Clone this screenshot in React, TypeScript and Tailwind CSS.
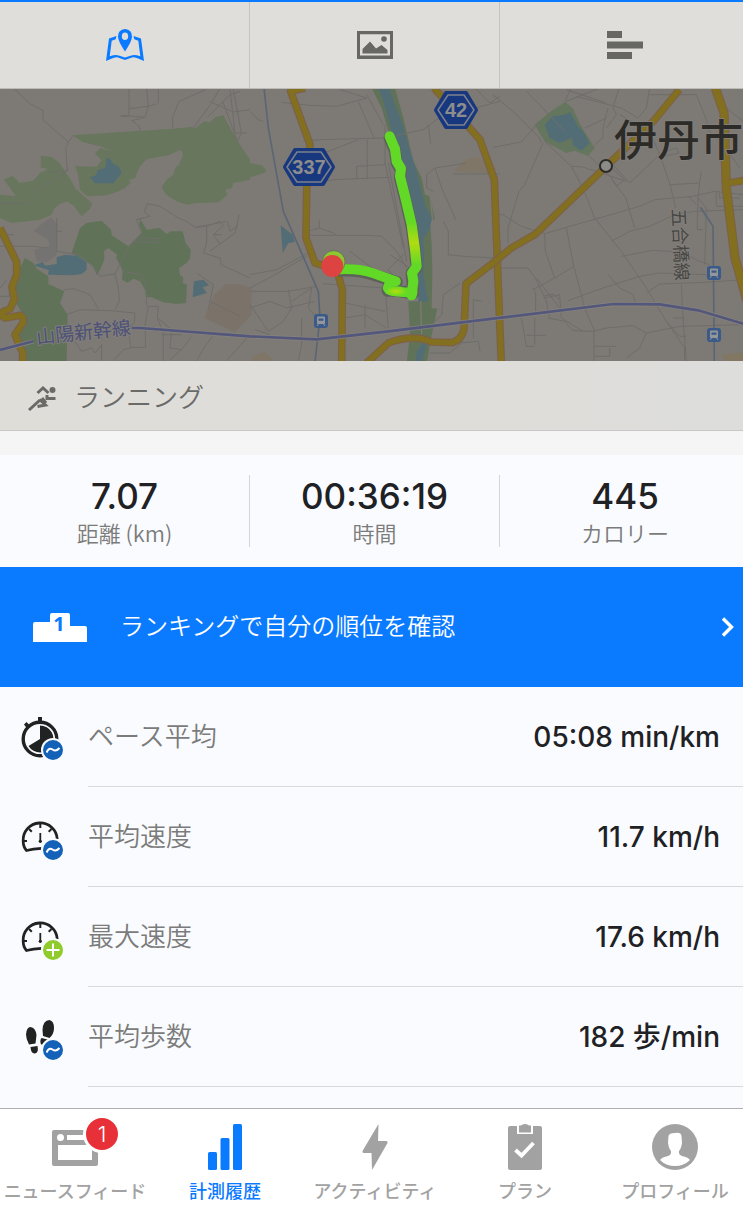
import type { ReactNode } from 'react';
import clsx from 'clsx';

type Badge = 'average' | 'max';

interface Metric {
  label: string;
  value: string;
  icon: ReactNode;
  badge: Badge;
}

// Geometry of the map is kept at 3 units per pixel, in three side by side tiles
const WEST_STREETS = [
  'M45 5L90 47 130 68 128 95 205 162 218 145',
  'M205 162L197 180 202 248 145 253',
  'M387 0V85L360 85M387 62L445 55 470 48M440 0L445 55 435 88 365 82M475 0V45M435 88L395 98 418 115 420 130',
  'M617 5L537 40 518 88V120',
  'M580 120L635 45 660 0M622 88L690 20 720 10M628 40L700 72 750 65M668 40L712 160M700 5L725 140M690 5L705 135H740M712 160L722 140',
  'M0 345H80L120 300 185 262 205 245',
  'M0 475H100L140 480M170 430H185M170 390V490L235 500 275 530 300 565 345 558 355 600 358 640 345 665',
  'M345 558L385 480 425 435M400 460L475 465 478 452 410 450M425 435L410 395 430 390',
  'M410 395L450 385 433 372 443 347 480 355 535 390 560 400 585 418 640 408 680 400',
  'M620 415V465L610 495 660 510 663 530 750 570M585 418L620 415 660 400 670 412 640 440 660 468M683 400L690 430 715 412M718 380L705 435 630 490M640 440H665',
  'M193 605L220 602 270 620 295 662M200 680L240 665 330 668 405 675 403 705 385 720 392 780 370 785 340 818',
  'M368 550L420 560 438 590 440 650 445 655H475L472 690 485 700 515 725 510 780 545 785M445 655L435 710 437 778H392M485 740H545M490 740V818M472 690L492 740',
  'M575 745L545 785 510 815M645 735L615 775 590 818M750 740L680 818M630 640L720 685M590 555L640 590 625 665',
  'M225 760L245 790 275 780 285 795 305 770M305 770V818M0 600L20 575M0 625H28V590M0 440H40',
];

const CENTRE_STREETS = [
  'M95 43L180 52 260 55 350 30M325 40L372 150M350 20L400 110M270 5L350 30',
  'M160 157L280 153 405 150M160 205L235 190 325 155M352 155V272M195 285L250 275 420 268M320 272V235L405 230',
  'M405 110V225L460 480M415 225L470 520M440 142L520 125 560 95 640 70 750 40M535 110L542 170',
  'M180 442H350L395 445 440 490 470 540M208 395V420L180 428M208 420L250 435 260 442',
  'M0 560L80 545 175 495M0 600L75 560 170 505M0 610H115L200 595M218 587L400 600 500 590M285 645L405 670M285 690L345 680 410 720M345 650V720M405 595L415 720',
  'M115 605L125 660 100 700 55 730 0 650M125 640L185 600 175 660 200 690M0 660L60 640 110 660 195 640M15 725L60 740',
  'M530 260L555 240 620 230 650 225M555 240L575 300 617 395M530 260V300L550 310M580 400L595 430V500L640 505 735 510M610 258H750',
  'M630 585L580 620 575 680 550 705M670 635L695 640M670 635V750M630 765L685 760 690 790M540 795H600L640 760',
  'M410 550L460 500M415 545L440 575M420 500L480 540M155 770L145 818M155 690L155 770',
  'M675 0L720 45 750 25M0 70L25 95 40 100M300 490L420 580',
];

const EAST_STREETS = [
  'M0 20L60 70 140 150 145 165M100 10L140 50 215 130M220 40L320 0M220 5L340 45M215 40L235 0M250 25L385 60 435 90 460 60',
  'M0 178L85 162 140 100M150 165L95 290 78 310 45 420V465M155 160L235 235 270 300 305 390 385 490 460 600 520 700 575 780V818',
  'M275 120L340 90M285 200L355 270 398 330 425 420M235 235L270 237 400 280M355 270L370 295 395 275 340 225M410 285L505 195 550 180 558 195 510 205 M410 285L350 220',
  'M345 60L330 120V150L305 170M340 120L370 80 360 60 378 0M380 80L470 130 500 200 530 285 548 360M470 0L460 60M470 20H610L640 95 650 130 690 170 740 240',
  'M0 375L30 380 85 415 155 437 220 418 360 378 440 355 485 335 600 325 665 310 750 320',
  'M155 437L157 490 185 570M220 418L240 525 275 660 303 725V818M120 605L185 570 243 535M118 600L128 615V680',
  'M355 460L410 430 470 415 545 380 605 370 750 365M385 505L480 487 565 492 620 520 650 530M225 638L330 600 440 565 500 555 640 560 670 575',
  'M625 250L620 285 530 290M620 285L615 330 640 360 635 530M615 330L613 390V425H630M670 310V355H750M680 310V330H740M585 325L610 350',
  'M565 590L570 690 580 818M460 615L500 588 640 583 750 575M345 560L380 600 420 620 428 645M700 60L750 100',
  'M20 540H105L130 575 160 640 170 690M155 630L200 620 205 690 270 730M130 570L200 660M150 625L180 618 200 635',
  'M85 690L100 775H125M100 742H160M125 690V770M165 690L215 700 240 728 300 730 340 720 420 713 460 735 560 715 750 710M460 735L440 780 400 810M540 690H575M305 775H370M305 805H350V780M520 700L560 745H580',
];

function Streets({ paths, x }: { paths: string[]; x: number }) {
  return (
    <g transform={`translate(${x} 0)`} fill="none" stroke="#6e6d6a" strokeWidth="3">
      {paths.map((d) => (
        <path key={d} d={d} />
      ))}
    </g>
  );
}

function Road({ d, width = 18 }: { d: string; width?: number }) {
  return (
    <g fill="none" strokeLinejoin="round">
      <path d={d} stroke="#7e6147" strokeWidth={width + 5} />
      <path d={d} stroke="#83701f" strokeWidth={width - 2} />
    </g>
  );
}

function RouteShield({ x, y, half, label }: { x: number; y: number; half: number; label: string }) {
  const hexagon = (w: number, h: number) =>
    `M${-w} 0L${-w + 10} ${-h}H${w - 10}L${w} 0L${w - 10} ${h}H${-w + 10}Z`;
  return (
    <g transform={`translate(${x} ${y})`} strokeLinejoin="round">
      <path d={hexagon(half, 17)} fill="#17377f" stroke="#17377f" strokeWidth="4" />
      <path d={hexagon(half - 2, 15)} fill="#17377f" stroke="#7d818c" strokeWidth="1.500" />
      <text
        y="7"
        textAnchor="middle"
        fill="#8d8d8d"
        className="font-['Liberation_Sans',sans-serif] text-[20px] font-bold"
      >
        {label}
      </text>
    </g>
  );
}

function Station({ x, y }: { x: number; y: number }) {
  return (
    <g transform={`translate(${x - 7} ${y - 7})`}>
      <rect width="14" height="14" rx="3" fill="#3b5a89" />
      <path
        d="M4 2.5h6q1 0 1 1V9q0 1-1 1H4Q3 10 3 9V3.500q0-1 1-1zM4.500 4.500v2.300h5V4.500z"
        fill="#939799"
        fillRule="evenodd"
      />
      <path d="M4.500 10L3 12M9.500 10l1.500 2" stroke="#939799" />
    </g>
  );
}

function RouteMap() {
  return (
    <svg
      viewBox="0 0 750 272"
      preserveAspectRatio="xMinYMid slice"
      className="block h-[272px] w-full bg-[#7d7974]"
      role="img"
      aria-label="伊丹市"
    >
      <defs>
        <radialGradient id="slow">
          <stop offset="0" stopColor="#b5dc0c" />
          <stop offset="1" stopColor="#62d926" />
        </radialGradient>
        <linearGradient id="track" gradientUnits="userSpaceOnUse" x1="0" y1="400" x2="0" y2="530">
          <stop offset="0" stopColor="#62d926" />
          <stop offset="0.5" stopColor="#b0dc10" />
          <stop offset="1" stopColor="#62d926" />
        </linearGradient>
      </defs>
      <g transform="translate(0 -1) scale(0.333333)">
        {/* parks */}
        <g fill="#67765d">
          <path d="M217 142L520 122 575 117 585 122 612 100 630 103 645 88 670 82 685 110 720 170 750 215V275L700 285 695 300 675 305 683 320 655 343 590 345 560 350 530 340 505 325 495 315 485 297 500 275 520 260 525 240 537 230 543 215 550 200 543 185 505 202 470 208 440 214 420 235 410 255 408 268 385 278 393 283 375 300 355 310 320 322 262 325 240 305 235 262 226 235 290 236 305 216 285 198 300 180 343 192 300 175 250 163Z" />
          <path d="M123 203L155 207 178 225 215 280 225 300 277 347 270 362 245 385 220 352 200 340 180 348 162 362 155 380 120 395 35 405 0 390V320L48 325 12 275 38 263 58 285 100 278 120 255 145 243 122 238Z" />
          <path d="M750 226L785 232 800 248 792 255 775 260 750 268Z" />
        </g>
        <g fill="#607359">
          <path d="M240 420L260 405 305 398 333 425 335 442 385 475 415 445 427 433 418 410 420 393 440 425 478 420 500 438 512 430H548L557 465 572 485 570 510 560 525 537 540 540 560 550 570 548 585 561 590 558 645 530 648 490 643 455 628 438 627 435 605 420 580 400 572 383 584 366 575 368 550 360 530 348 510 352 500 325 480 312 490 313 515 300 545 290 562 280 535 250 515 215 495Z" />
          <path d="M75 510L100 525 110 542 145 565V588L193 610 180 645 203 680 200 825H75L50 742 75 690 45 640 40 590 55 550Z" />
        </g>
        <g transform="translate(750 0)">
          <path
            d="M365 0H435L460 90 490 220 515 270 525 320 540 325 555 395H540L545 470 547 550 545 660 562 662 545 740 530 825H470L480 740 475 640H515L500 500 470 330 430 180 395 60Z"
            fill="#607359"
          />
          <path
            d="M385 0H418L435 50 455 100 475 170 500 250 512 300 528 360 540 378 545 395 538 425 520 450 522 500 520 560 535 640 505 642 500 520 480 350 450 220 425 130 400 40Z"
            fill="#536d77"
          />
          <path d="M515 735L532 760 515 825H495L500 790 515 770Z" fill="#536d77" />
          <path d="M512 640L515 740M540 320L548 395" stroke="#7d7974" strokeWidth="4" />
          <path d="M92 412L128 440 135 462 115 465 98 495Z" fill="#536d77" />
          <path d="M610 250L650 212 685 208 735 235 738 258 640 252Z" fill="#7f7668" />
          <path d="M5 805L45 792 70 818H5Z" fill="#7f7668" />
        </g>
        <path
          d="M1696 42L1719 62 1741 110 1784 180 1764 203 1724 188 1699 195 1634 160 1604 110 1659 65Z"
          fill="#64765d"
        />
        <g fill="#536d77">
          <path d="M270 267L288 262 293 247 315 240 320 212 328 210 340 228 355 235 365 255 340 286H285Z" />
          <path d="M102 532L128 522 135 533 170 528V508L195 500 230 503 260 523V545L245 558 215 562 143 560 147 547Z" />
          <path d="M582 580L610 575 628 592 608 598 620 615 578 628Z" />
          <path d="M1634 110L1659 85 1694 80 1711 72 1734 115 1749 130 1769 165 1744 188 1719 172 1716 150 1679 165 1649 150Z" />
        </g>
        <path d="M100 428L152 388 172 408 168 470 170 500 140 522 110 520 103 485 148 474 145 455Z" fill="#757371" />
        <path d="M613 690L642 620 678 588H715L755 600V680L705 733Z" fill="#7b736a" />
        <path d="M2165 800L2250 792V820H2175Z" fill="#817762" />

        <Streets paths={WEST_STREETS} x={0} />
        <Streets paths={CENTRE_STREETS} x={750} />
        <Streets paths={EAST_STREETS} x={1479} />

        {/* local railways */}
        <g fill="none" stroke="#5b6675" strokeWidth="5">
          <path d="M792 0L805 120 850 370 955 610 960 690 945 820" />
          <path d="M2101 358L2139 415 2143 820" />
        </g>

        {/* main roads */}
        <Road d="M0 420L50 522V560L36 595 43 635 30 663 10 670Q2 685 15 690L60 682Q75 688 68 705L45 740 68 795V825" />
        <Road d="M915 0L872 10 930 170Q925 260 920 300L918 450 945 525 1010 545 1027 605 1025 825" />
        <Road d="M1302 0L1440 155 1483 275 1495 600 1504 825" />
        <Road d="M1100 825L1165 765Q1215 745 1265 752L1295 762 1357 764Q1385 755 1392 725L1398 587 1479 525 1534 480 1604 440 1819 235 1960 100 2038 5" />
        <Road d="M2146 0L2172 75 2179 300 2205 510 2250 670" width={23} />
        <Road d="M2185 285L2250 275" />

        {/* shinkansen */}
        <path
          d="M0 786L100 760M395 720H420L750 745 950 754 1165 730 1479 692 1840 648 1979 649 2094 667 2250 713"
          fill="none"
          stroke="#85817e"
          strokeWidth="13"
        />
        <path
          d="M0 786L100 760M395 720H420L750 745 950 754 1165 730 1479 692 1840 648 1979 649 2094 667 2250 713"
          fill="none"
          stroke="#53577b"
          strokeWidth="8"
        />

        {/* recorded track */}
        <g fill="none" strokeLinecap="round" strokeLinejoin="round">
          <path
            d="M1020 548Q1080 545 1120 560L1190 582M1170 582L1163 608H1190L1238 617M1169 150L1185 188 1190 225 1203 247 1200 270 1215 330 1235 415 1245 490 1250 540 1235 555 1240 615"
            stroke="#5d6259"
            strokeWidth="36"
          />
          <path d="M1020 544Q1080 541 1120 556L1188 580M1170 582L1163 600Q1175 615 1238 613" stroke="#62d926" strokeWidth="29" />
          <path
            d="M1169 145L1185 183 1190 220 1203 242 1200 265 1215 325 1235 410 1245 485 1250 535 1236 555 1240 580 1235 622"
            stroke="url(#track)"
            strokeWidth="30"
          />
        </g>
        <ellipse cx="1188" cy="610" rx="34" ry="15" fill="url(#slow)" />
        <circle cx="1001" cy="522" r="34" fill="#8cc832" stroke="#5f634f" strokeWidth="2" />
        <circle cx="997" cy="534" r="33" fill="#dd4441" />
      </g>

      <RouteShield x={309} y={78} half={24} label="337" />
      <RouteShield x={456} y={21} half={20} label="42" />
      <Station x={321} y={232} />
      <Station x={714} y={184} />
      <Station x={714} y={246} />
      <circle cx="606" cy="77" r="6" fill="#8d8b87" stroke="#2c2b29" strokeWidth="2" />
      <g className="font-['Noto_Sans_CJK_JP',sans-serif]" strokeLinejoin="round" paintOrder="stroke" stroke="#827e7a">
        <text x="614" y="67" fill="#2c2b28" strokeWidth="2" className="text-[43px] font-medium">
          伊丹市
        </text>
        <text x="37" y="255" transform="rotate(-6 37 255)" fill="#4c5178" strokeWidth="2" className="text-[19px]">
          山陽新幹線
        </text>
        <text
          x="672"
          y="120"
          transform="rotate(87 672 120)"
          fill="#464644"
          strokeWidth="2"
          className="text-[18px]"
        >
          五合橋線
        </text>
      </g>
    </svg>
  );
}

function MapIcon() {
  return (
    <svg viewBox="0 0 38 32" className="h-8 w-[38px]" fill="currentColor">
      <path
        d="M10.500 7L3 9.500 0 32q10-5 12-3.500l7 2.500 7-2.500q2-1.500 12 3.500L35 9.500 27.500 7l.8 3.200 4 1.500 2 15.500q-6-2-9-.8L19 28.500l-6.300-2.100q-3-1.200-9 .8l2-15.500 4-1.500z"
        fillRule="evenodd"
      />
      <path
        d="M19 0q7 .5 7 7.500 0 4.500-7 15-7-10.500-7-15Q12 .5 19 0zm0 3.500q-3.200 0-3.200 3.800t3.200 3.800 3.200-3.800-3.200-3.800z"
        fillRule="evenodd"
      />
    </svg>
  );
}

function PhotoIcon() {
  return (
    <svg viewBox="0 0 36 28" className="h-7 w-9" fill="currentColor">
      <path d="M0 0h36v28H0zM3 3.200v21.300h30V3.200z" fillRule="evenodd" />
      <path d="M5.500 22.500v-4.500L13 10.500l6 7 5.500-3.500 6 5v3.500z" />
      <circle cx="27" cy="8" r="2.800" />
    </svg>
  );
}

function SplitsIcon() {
  return (
    <svg viewBox="0 0 36 28" className="h-7 w-9" fill="currentColor">
      <path d="M0 0h15v7H0zM0 10.500h36v7H0zM0 21h25v7H0z" />
    </svg>
  );
}

function RunnerIcon() {
  return (
    <svg viewBox="0 0 28 26" className="h-[26px] w-7" fill="none" stroke="currentColor" strokeWidth="3">
      <path d="M9.500 8L15 3l5.500 5" />
      <path d="M1 25L12 15" />
      <path d="M11.500 14.500l6 5.500-8 1.500M14 13l4 5" />
      <path d="M19 10v3.500h8.500" />
      <circle cx="24.500" cy="5" r="3" fill="currentColor" stroke="none" />
    </svg>
  );
}

function StopwatchIcon() {
  return (
    <svg viewBox="0 0 44 46" className="h-[46px] w-11">
      <circle cx="19" cy="23" r="16.800" fill="none" stroke="#202322" strokeWidth="3.400" />
      <path d="M17 1h4v5h-4zM3 8.500L5.500 6l3.500 3.500-3 3z" fill="#202322" />
      <path d="M19 23V9.500a13.500 13.500 0 1 1-11.500 20.500z" fill="#202322" />
    </svg>
  );
}

function GaugeIcon() {
  return (
    <svg viewBox="0 0 44 46" className="h-[46px] w-11" fill="none" stroke="#202322">
      <path d="M20.500 32.300Q12 32.500 5.500 34.500 2.200 31 2.200 25a17 17 0 0 1 34-2" strokeWidth="2.800" />
      <path d="M19.300 8v4M8 13l2.800 2.800M30.500 13l-2.800 2.800M3 25h3M35 25h-3" strokeWidth="2" />
      <path d="M19.300 17v9" strokeWidth="1.800" />
      <circle cx="19.300" cy="25.300" r="1.600" fill="#202322" stroke="none" />
    </svg>
  );
}

function FootstepsIcon() {
  return (
    <svg viewBox="0 0 44 46" className="h-[46px] w-11" fill="#202322">
      <path d="M9.500 11q5 .5 6 8l-1 8.500-6.500 1Q5 23 5 18.500 5.500 11 9.500 11zM9.500 31l7-1q1.500 7-2.500 7.500T9.500 31z" />
      <path d="M28.500 4q4.500 1 4.500 8 0 6-4.500 10l-6.500-2-.5-6Q22 4 28.500 4zM20.500 22l6 1.500-3 5h-3.500q-1.500-4 .5-6.500z" />
    </svg>
  );
}

function MetricBadge({ kind }: { kind: Badge }) {
  return (
    <span
      className={clsx(
        'absolute top-[22px] left-5 flex size-6 items-center justify-center rounded-full border-2 border-[#fafbfe]',
        kind === 'average' ? 'bg-[#1462b8]' : 'bg-[#8fcb2b]'
      )}
    >
      <svg viewBox="0 0 14 14" className="size-3.5" fill="none" stroke="#fff" strokeWidth="2">
        {kind === 'average' ? <path d="M.5 9.500Q3 4 6.500 6.500T13.500 5" /> : <path d="M7 .5v13M.5 7h13" />}
      </svg>
    </span>
  );
}

function NewsIcon() {
  return (
    <svg viewBox="0 0 46 46" className="size-[46px]">
      <path
        d="M2 6h42q2 0 2 2v32q0 2-2 2H2q-2 0-2-2V8q0-2 2-2zm4 15v15h34V21zm9-10v5h26v-5zM8.500 10a3.200 3.200 0 1 0 0 7 3.200 3.200 0 0 0 0-7z"
        fill="currentColor"
        fillRule="evenodd"
      />
    </svg>
  );
}

function BarsIcon() {
  return (
    <svg viewBox="0 0 46 46" className="size-[46px]" fill="currentColor">
      <rect x="6" y="28" width="9" height="18" rx="1.500" />
      <rect x="18.500" y="14" width="9" height="32" rx="1.500" />
      <rect x="31" width="9" height="46" rx="1.500" />
    </svg>
  );
}

function BoltIcon() {
  return (
    <svg viewBox="0 0 46 46" className="size-[46px]" fill="currentColor">
      <path d="M26.500 0L10.500 27q-.5 1.500 1 2h8L20 46l15.500-27q.5-1.500-1-2H26z" />
    </svg>
  );
}

function ClipboardIcon() {
  return (
    <svg viewBox="0 0 46 46" className="size-[46px]" fill="currentColor">
      <path d="M8 2h7v8h16V2h7q2 0 2 2v40q0 2-2 2H8q-2 0-2-2V4q0-2 2-2z" />
      <path d="M17 1.500h2q1-1.500 4-1.500t4 1.500h2v7H17z" />
      <path d="M13.500 26l6 5.500L31.500 19" fill="none" stroke="#fff" strokeWidth="3.800" />
    </svg>
  );
}

function ProfileIcon() {
  return (
    <svg viewBox="0 0 46 46" className="size-[46px]">
      <circle cx="23" cy="23" r="23" fill="currentColor" />
      <path
        d="M23 9q6-1 6.500 3l.5 7q-1 6-3 8v2q0 2 3 3 6 1 8 4-6 6-15 6T8 36q2-3 8-4 3-1 3-3v-2q-2-2-3-8l.5-7Q17 9 23 9z"
        fill="#fff"
      />
    </svg>
  );
}

const VIEWS = [
  { name: '地図', icon: <MapIcon />, active: true },
  { name: '写真', icon: <PhotoIcon />, active: false },
  { name: 'ラップ', icon: <SplitsIcon />, active: false },
];

const TOTALS = [
  { value: '7.07', label: '距離 (km)' },
  { value: '00:36:19', label: '時間' },
  { value: '445', label: 'カロリー' },
];

const METRICS: Metric[] = [
  { label: 'ペース平均', value: '05:08 min/km', icon: <StopwatchIcon />, badge: 'average' },
  { label: '平均速度', value: '11.7 km/h', icon: <GaugeIcon />, badge: 'average' },
  { label: '最大速度', value: '17.6 km/h', icon: <GaugeIcon />, badge: 'max' },
  { label: '平均歩数', value: '182 歩/min', icon: <FootstepsIcon />, badge: 'average' },
];

const TABS = [
  { label: 'ニュースフィード', icon: <NewsIcon />, count: 1 },
  { label: '計測履歴', icon: <BarsIcon />, active: true },
  { label: 'アクティビティ', icon: <BoltIcon /> },
  { label: 'プラン', icon: <ClipboardIcon /> },
  { label: 'プロフィール', icon: <ProfileIcon /> },
];

export default function App() {
  return (
    <div className="min-h-screen overflow-x-hidden bg-[#fafbfe] font-['Inter','Noto_Sans_CJK_JP',sans-serif] text-[#202124]">
      <div className="-mr-[7px] flex min-h-screen flex-col">
        {/* View switcher */}
        <nav className="grid grid-cols-3 divide-x divide-[#c5c4c2] border-t-2 border-b border-t-[#0a7aff] border-b-[#bcbbb8] bg-[#dfdedb]">
          {VIEWS.map((view) => (
            <button
              key={view.name}
              type="button"
              aria-label={view.name}
              className={clsx(
                'flex h-[86px] items-center justify-center',
                view.active ? 'text-[#0a7aff]' : 'text-[#676764]'
              )}
            >
              {view.icon}
            </button>
          ))}
        </nav>

        <RouteMap />

        {/* Activity type */}
        <div className="flex h-[70px] items-center border-b border-[#c9c8c6] bg-linear-to-r from-[#dfddd8] to-[#dddddb] pt-1 pl-7 text-[#6a6a68]">
          <RunnerIcon />
          <h1 className="pl-[18px] text-[26px] leading-9 font-[350]">ランニング</h1>
        </div>
        <div className="h-6 bg-[#f5f5f5]" />

        {/* Totals */}
        <dl className="grid grid-cols-3 divide-x divide-[#d5d6d9] py-5">
          {TOTALS.map((total) => (
            <div key={total.label} className="flex h-[72px] flex-col-reverse items-center justify-center pt-0.5">
              <dt className="font-['Noto_Sans_CJK_JP',sans-serif] text-[22px] leading-8 font-[350] text-[#7b7b7b]">
                {total.label}
              </dt>
              <dd className="text-[35px] leading-10 font-medium">{total.value}</dd>
            </div>
          ))}
        </dl>

        {/* Ranking banner */}
        <a href="#ranking" className="flex h-[120px] items-center bg-[#0a7aff] pr-4 pl-[33px] text-white">
          <svg viewBox="0 0 54 29" className="h-[29px] w-[54px] overflow-visible">
            <path d="M2 9h15V2q0-2 2-2h16q2 0 2 2v11h15q2 0 2 2v14H0V11q0-2 2-2z" fill="#fff" />
            <text
              x="26"
              y="18"
              textAnchor="middle"
              fill="#0a7aff"
              className="font-['Open_Sans',sans-serif] text-[20px] font-bold"
            >
              1
            </text>
          </svg>
          <span className="flex-1 pl-[33px] text-2xl font-[350]">ランキングで自分の順位を確認</span>
          <svg viewBox="0 0 12 20" className="h-5 w-3" fill="none" stroke="#fff" strokeWidth="3.400">
            <path d="M1 1.500l8.500 8.500L1 18.500" />
          </svg>
        </a>

        {/* Metrics */}
        <ul>
          {METRICS.map((metric) => (
            <li key={metric.label} className="flex h-[100px] pl-[21px]">
              <div className="w-[67px] pt-[29px]">
                <div className="relative">
                  {metric.icon}
                  <MetricBadge kind={metric.badge} />
                </div>
              </div>
              <div className="flex flex-1 items-center justify-between border-b border-[#d9dadd] pr-[30px]">
                <span className="text-[26px] font-[350] text-[#7b7b7b]">{metric.label}</span>
                <span className="text-[28px] font-medium">{metric.value}</span>
              </div>
            </li>
          ))}
        </ul>

        {/* Bottom tab bar */}
        <nav className="mt-auto grid grid-cols-5 border-t border-[#adaeb0] bg-white pt-[15px] pb-[3px]">
          {TABS.map((tab) => (
            <a
              key={tab.label}
              href="#"
              className={clsx(
                'flex flex-col items-center gap-2.5 font-medium whitespace-nowrap',
                tab.active ? 'text-[#0a7aff]' : 'text-[#a2a2a2]'
              )}
            >
              <span className="relative">
                {tab.icon}
                {tab.count && (
                  <span className="absolute -top-[9px] -right-[23px] flex size-[38px] items-center justify-center rounded-full border-[3px] border-white bg-[#e83038] text-[22px] leading-none font-light text-white">
                    {tab.count}
                  </span>
                )}
              </span>
              <span className="text-lg leading-6">{tab.label}</span>
            </a>
          ))}
        </nav>
      </div>
    </div>
  );
}
